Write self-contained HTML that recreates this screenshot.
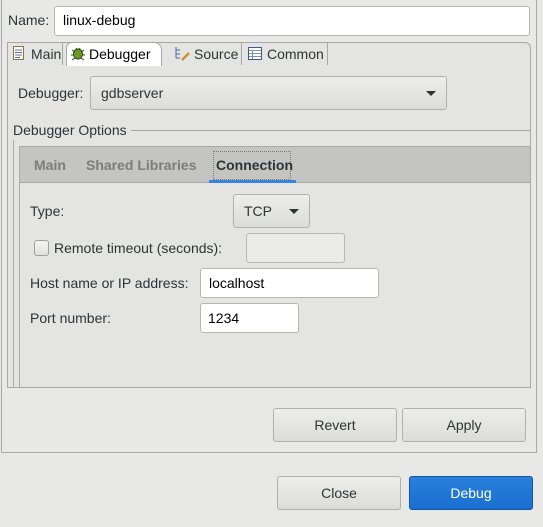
<!DOCTYPE html>
<html><head><style>
body{margin:0;width:543px;height:527px;background:#e8e8e7;font-family:"Liberation Sans",sans-serif;font-size:14px;color:#2e3436;position:relative;overflow:hidden}
.a{position:absolute}
.t{position:absolute;line-height:16px;white-space:nowrap}
.inp{position:absolute;background:#fff;border:1px solid #b6b6b3;border-radius:3px;box-sizing:border-box}
.btn{position:absolute;box-sizing:border-box;border:1px solid #b0b0ac;border-radius:3px;background:linear-gradient(#ededeb,#dcdcd9);text-align:center;font-size:14px}
.arrow{position:absolute;width:0;height:0;border-left:5px solid transparent;border-right:5px solid transparent;border-top:5px solid #2e3436}
</style></head><body>
<div class="a" style="left:1px;top:0;width:536px;height:453px;border:1px solid #a8a8a6;border-top:none;box-sizing:border-box"></div>
<div class="t" style="left:8px;top:12px">Name:</div>
<div class="inp" style="left:54px;top:6px;width:476px;height:30px"></div>
<div class="t" style="left:63px;top:12px;color:#000">linux-debug</div>

<div class="a" style="left:7px;top:65px;width:524px;height:323px;border:1px solid #a8a8a6;border-top:1px solid #a0a0a0;box-sizing:border-box;background:#e4e4e3"></div>
<div class="a" style="left:7px;top:42px;width:524px;height:24px;border:1px solid #a8a8a6;border-bottom:none;border-radius:0 6px 0 0;box-sizing:border-box;background:#e4e4e3"></div>
<div class="a" style="left:66px;top:42px;width:96px;height:24px;background:#fff;border:1px solid #a8a8a6;border-bottom:none;border-radius:6px 8px 0 0;box-sizing:border-box"></div>
<div class="a" style="left:62px;top:43px;width:1px;height:22px;background:#a8a8a6"></div>
<div class="a" style="left:241px;top:43px;width:1px;height:22px;background:#a8a8a6"></div>
<div class="a" style="left:327px;top:43px;width:1px;height:22px;background:#a8a8a6"></div>
<svg class="a" style="left:13px;top:46px" width="12" height="15"><rect x="0.5" y="0.5" width="10" height="13" fill="#fff" stroke="#8a7440"/><path d="M2 4h7M2 6.5h7M2 9h7M2 11.5h5" stroke="#5a6fa0"/></svg>
<div class="t" style="left:31px;top:46px">Main</div>
<svg class="a" style="left:70px;top:45px" width="16" height="16"><ellipse cx="8" cy="9" rx="4.5" ry="5" fill="#6a9a2a" stroke="#2e4a10"/><path d="M2 5l3 2M14 5l-3 2M1 10h3M15 10h-3M2 15l3-2M14 15l-3-2M6 3l1 2M10 3l-1 2" stroke="#2e4a10"/></svg>
<div class="t" style="left:89px;top:46px;color:#000">Debugger</div>
<svg class="a" style="left:174px;top:46px" width="16" height="16"><path d="M2 1v11M2 4h4M2 8h4M2 12h4" stroke="#4a6aa8"/><path d="M8 14l7-7" stroke="#d09030" stroke-width="2.5"/></svg>
<div class="t" style="left:194px;top:46px">Source</div>
<svg class="a" style="left:248px;top:47px" width="14" height="13"><rect x="0.5" y="0.5" width="13" height="12" fill="#fff" stroke="#3a5a90"/><path d="M1 3.5h12M4.5 3v9M1 6.5h12M1 9.5h12" stroke="#7a90b8"/></svg>
<div class="t" style="left:267px;top:46px">Common</div>

<div class="t" style="left:18px;top:85px">Debugger:</div>
<div class="btn" style="left:90px;top:76px;width:357px;height:34px"></div>
<div class="t" style="left:101px;top:85px">gdbserver</div>
<div class="arrow" style="left:426px;top:91px"></div>

<div class="t" style="left:13px;top:122px">Debugger Options</div>
<div class="a" style="left:131px;top:130px;width:399px;height:1px;background:#a8a8a6"></div>
<div class="a" style="left:13px;top:140px;width:1px;height:247px;background:#a8a8a6"></div>
<div class="a" style="left:530px;top:130px;width:1px;height:257px;background:#a8a8a6"></div>

<div class="a" style="left:19px;top:146px;width:511px;height:37px;background:#c4c4c3;border-top:1px solid #a8a8a6;border-bottom:1px solid #a8a8a6;box-sizing:border-box"></div>
<div class="a" style="left:19px;top:146px;width:1px;height:241px;background:#a8a8a6"></div>
<div class="t" style="left:34px;top:157px;color:#7c7c7a;font-weight:bold">Main</div>
<div class="t" style="left:86px;top:157px;color:#7c7c7a;font-weight:bold">Shared Libraries</div>
<div class="a" style="left:213px;top:151px;width:78px;height:29px;border:1px dotted #777;box-sizing:border-box"></div>
<div class="t" style="left:216px;top:157px;color:#2e3436;font-weight:bold">Connection</div>
<div class="a" style="left:209px;top:180px;width:87px;height:3px;background:#3584e4"></div>

<div class="t" style="left:30px;top:203px">Type:</div>
<div class="btn" style="left:233px;top:194px;width:77px;height:34px"></div>
<div class="t" style="left:244px;top:203px">TCP</div>
<div class="arrow" style="left:289px;top:209px"></div>
<div class="a" style="left:34px;top:240px;width:15px;height:16px;border:1px solid #a0a09c;border-radius:3px;background:linear-gradient(#f4f4f3,#e2e2e0);box-sizing:border-box"></div>
<div class="t" style="left:54px;top:240px">Remote timeout (seconds):</div>
<div class="a" style="left:246px;top:233px;width:99px;height:30px;border:1px solid #b6b6b3;border-radius:3px;background:#ebebea;box-sizing:border-box"></div>
<div class="t" style="left:30px;top:275px">Host name or IP address:</div>
<div class="inp" style="left:200px;top:268px;width:179px;height:30px"></div>
<div class="t" style="left:209px;top:275px;color:#000">localhost</div>
<div class="t" style="left:30px;top:310px">Port number:</div>
<div class="inp" style="left:200px;top:303px;width:99px;height:30px"></div>
<div class="t" style="left:208px;top:310px;color:#000">1234</div>

<div class="btn" style="left:273px;top:408px;width:124px;height:34px;line-height:32px">Revert</div>
<div class="btn" style="left:402px;top:408px;width:124px;height:34px;line-height:32px">Apply</div>
<div class="btn" style="left:277px;top:476px;width:124px;height:34px;line-height:32px">Close</div>
<div class="btn" style="left:409px;top:476px;width:124px;height:34px;line-height:32px;background:linear-gradient(#2a7fdc,#1a6fd0);border-color:#1656a8;color:#fff">Debug</div>
</body></html>
